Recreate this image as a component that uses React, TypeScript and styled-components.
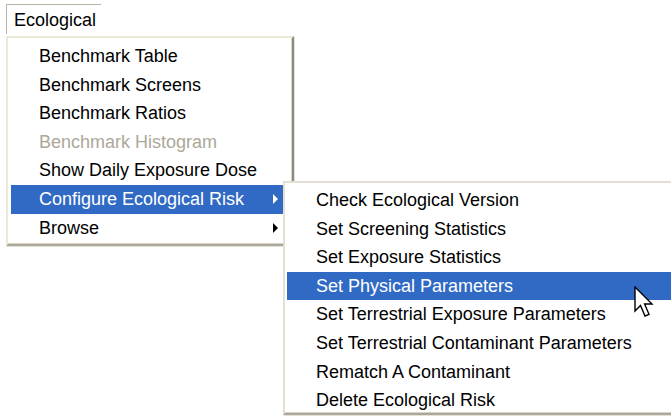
import React from "react";
import styled, { createGlobalStyle } from "styled-components";

const GlobalStyle = createGlobalStyle`
  html, body {
    margin: 0;
    padding: 0;
    background: #ffffff;
    overflow: hidden;
  }
  body {
    font-family: "Liberation Sans", Arial, sans-serif;
    font-size: 18px;
    color: #000000;
  }
`;

const Page = styled.div`
  width: 671px;
  height: 417px;
  padding: 4px 0 0 6px;
  box-sizing: border-box;
  display: flex;
  flex-direction: column;
  align-items: flex-start;
`;

const MenuTitle = styled.div`
  height: 30px;
  width: 95px;
  box-sizing: border-box;
  border-top: 1px solid #b7b4a8;
  border-left: 1px solid #b7b4a8;
  padding: 4px 0 0 7px;
  line-height: 23px;
`;

const Popup = styled.div<{ $width: number }>`
  position: relative;
  width: ${(p) => p.$width}px;
  box-sizing: border-box;
  background: #ffffff;
  border-top: 2px solid #ece9d8;
  border-left: 2px solid #ece9d8;
  border-right: 2px solid #8e8b7f;
  border-bottom: 2px solid #aca899;
  box-shadow: inset -1px -1px 0 #d6d3c6, 1px 1px 0 #e4e2d8;
  padding: 4px 8px 3px 3px;
`;

const MainMenu = styled(Popup)`
  margin-top: 2px;
  height: 210px;
`;

// opens to the right of its parent row
const SubMenu = styled(Popup)`
  position: absolute;
  left: 272px;
  top: -4px;
  height: 234px;
  padding: 3px 0 2px 2px;
  border-right: none;
  border-left-color: #e4e1d4;
  border-top-color: #e4e1d4;
`;

const Item = styled.div<{ $active?: boolean; $disabled?: boolean; $indent: number }>`
  position: relative;
  height: 28.6px;
  line-height: 28.6px;
  padding-left: ${(p) => p.$indent}px;
  white-space: nowrap;
  background: ${(p) => (p.$active ? "#316ac5" : "transparent")};
  color: ${(p) => (p.$disabled ? "#aca899" : p.$active ? "#ffffff" : "#000000")};
`;

const Arrow = styled.span<{ $light?: boolean }>`
  position: absolute;
  right: 6px;
  top: 9px;
  width: 0;
  height: 0;
  border-top: 5px solid transparent;
  border-bottom: 5px solid transparent;
  border-left: 5px solid ${(p) => (p.$light ? "#ffffff" : "#000000")};
`;

const Pointer = styled.svg`
  position: absolute;
  right: 27px;
  top: 14px;
`;

const mainItems = [
  { label: "Benchmark Table" },
  { label: "Benchmark Screens" },
  { label: "Benchmark Ratios" },
  { label: "Benchmark Histogram", disabled: true },
  { label: "Show Daily Exposure Dose" },
  { label: "Configure Ecological Risk", sub: true, active: true },
  { label: "Browse", sub: true },
];

const subItems = [
  "Check Ecological Version",
  "Set Screening Statistics",
  "Set Exposure Statistics",
  "Set Physical Parameters",
  "Set Terrestrial Exposure Parameters",
  "Set Terrestrial Contaminant Parameters",
  "Rematch A Contaminant",
  "Delete Ecological Risk",
];

const MousePointer: React.FC = () => (
  <Pointer width="22" height="34" viewBox="0 0 22 34">
    <path
      d="M1 1 L1 25 L6.5 19.5 L11 30 L15 28.3 L10.6 18 L18 18 Z"
      fill="#ffffff"
      stroke="#000000"
      strokeWidth="1.4"
      strokeLinejoin="miter"
    />
  </Pointer>
);

const App: React.FC = () => {
  return (
    <>
      <GlobalStyle />
      <Page>
        <MenuTitle>Ecological</MenuTitle>
        <MainMenu $width={288}>
          {mainItems.map((item) => (
            <Item
              key={item.label}
              $indent={28}
              $active={item.active}
              $disabled={item.disabled}
            >
              {item.label}
              {item.sub && <Arrow $light={item.active} />}
              {item.active && (
                <SubMenu $width={400}>
                  {subItems.map((label) => {
                    const active = label === "Set Physical Parameters";
                    return (
                      <Item key={label} $indent={29} $active={active}>
                        {label}
                        {active && <MousePointer />}
                      </Item>
                    );
                  })}
                </SubMenu>
              )}
            </Item>
          ))}
        </MainMenu>
      </Page>
    </>
  );
};

export default App;
